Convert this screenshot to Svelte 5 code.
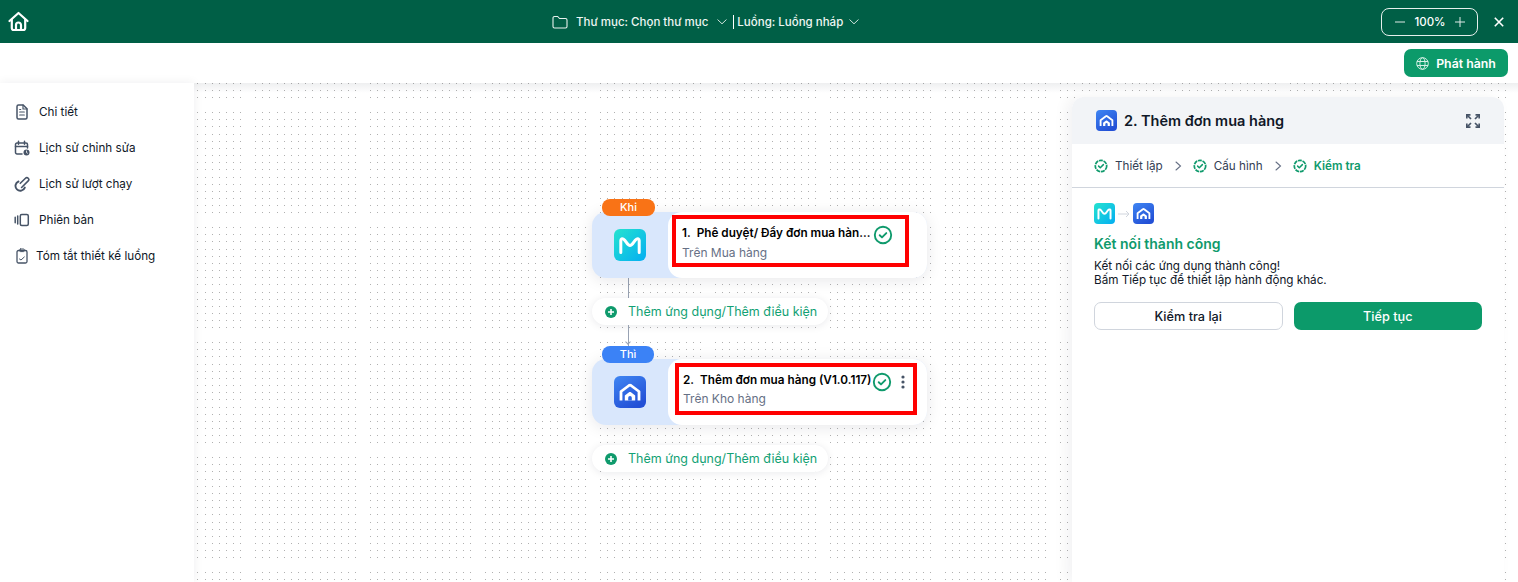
<script>
  const menu = [
    { label: 'Chi tiết', icon: 'doc' },
    { label: 'Lịch sử chỉnh sửa', icon: 'calendar' },
    { label: 'Lịch sử lượt chạy', icon: 'clip' },
    { label: 'Phiên bản', icon: 'version' },
    { label: 'Tóm tắt thiết kế luồng', icon: 'board', tight: true }
  ];

  const steps = ['Thiết lập', 'Cấu hình', 'Kiểm tra'];

  // 15 dots in every 115px tile, the leftover is the visible gap
  const dotOffsets = Array.from({ length: 15 }, (_, i) => Math.round(i * 7.17));
</script>

{#snippet mLogo(size)}
  <svg width={size} height={size} viewBox="0 0 32 32">
    <defs>
      <linearGradient id="mgrad" x1="0" y1="0" x2="1" y2="1">
        <stop offset="0" stop-color="#25e3cf" />
        <stop offset="1" stop-color="#04aef2" />
      </linearGradient>
    </defs>
    <rect width="32" height="32" rx="6" fill="url(#mgrad)" />
    <path d="M6.800 23.500V11.500c0-1.600 1.300-2.200 2.800-1.300C12.200 11.800 13.300 16.500 16 16.500s3.800-4.700 6.400-6.300c1.500-.9 2.800-.3 2.800 1.300v12" fill="none" stroke="#fff" stroke-width="3" stroke-linecap="round" stroke-linejoin="round" />
  </svg>
{/snippet}

{#snippet houseLogo(size)}
  <svg width={size} height={size} viewBox="0 0 32 32">
    <defs>
      <linearGradient id="hgrad" x1="0" y1="0" x2="0.6" y2="1">
        <stop offset="0" stop-color="#3f86f3" />
        <stop offset="1" stop-color="#2350d6" />
      </linearGradient>
    </defs>
    <rect width="32" height="32" rx="6" fill="url(#hgrad)" />
    <path d="M7 24.500V15.500L15 9.500q1-.7 2 0l8 6V24.500" fill="none" stroke="#fff" stroke-width="2.800" stroke-linejoin="round" />
    <path d="M10.800 24.500v-5l4.600-3.400q.6-.4 1.200 0l4.600 3.400v5z" fill="#fff" />
    <path d="M14.200 24.500v-2.800a1.800 1.800 0 0 1 3.600 0v2.800z" fill="#2d66e2" />
  </svg>
{/snippet}

{#snippet checkSolid()}
  <svg class="check" width="20" height="20" viewBox="0 0 20 20" fill="none">
    <circle cx="10" cy="10" r="8.200" stroke="#0f9a6c" stroke-width="1.900" />
    <path d="M6.700 10.200 9 12.400l4.300-4.300" stroke="#0f9a6c" stroke-width="1.900" stroke-linecap="round" stroke-linejoin="round" />
  </svg>
{/snippet}

{#snippet checkDashed()}
  <svg width="14" height="14" viewBox="0 0 14 14" fill="none">
    <circle cx="7" cy="7" r="5.700" stroke="#0f9a6c" stroke-width="1.700" stroke-dasharray="4 .8" />
    <path d="M4.600 7.100 6.300 8.700 9.400 5.600" stroke="#0f9a6c" stroke-width="1.500" stroke-linecap="round" stroke-linejoin="round" />
  </svg>
{/snippet}

{#snippet plusCircle()}
  <svg width="14" height="14" viewBox="0 0 14 14">
    <circle cx="7" cy="7" r="6" fill="#0f9a6c" />
    <path d="M4 7h6M7 4v6" stroke="#fff" stroke-width="1.600" />
  </svg>
{/snippet}

{#snippet chevron()}
  <svg width="10" height="6" viewBox="0 0 10 6" fill="none">
    <path d="M.8.800 5 4.800 9.200.8" stroke="#cfe3dc" stroke-width="1" stroke-linecap="round" />
  </svg>
{/snippet}

{#snippet stepArrow()}
  <svg width="7" height="10" viewBox="0 0 7 10" fill="none">
    <path d="M1 1l4.500 4L1 9" stroke="#667085" stroke-width="1.100" stroke-linecap="round" />
  </svg>
{/snippet}

<div class="page">
  <header class="topbar">
    <svg class="home" width="21" height="21" viewBox="0 0 21 21" fill="none" stroke="#fff" stroke-width="2.200" stroke-linejoin="round" stroke-linecap="round">
      <path d="M1.500 10 10.500 2l9 8" />
      <path d="M3.800 8.500V17a2 2 0 0 0 2 2h9.400a2 2 0 0 0 2-2V8.500" />
      <path d="M8 19v-5a2.500 2.500 0 0 1 5 0v5" />
    </svg>

    <div class="crumbs">
      <svg width="16" height="14" viewBox="0 0 16 14" fill="none" stroke="#e8f2ee" stroke-width="1.100">
        <path d="M1 3a1.500 1.500 0 0 1 1.500-1.500h3.200L7.500 3.500h6A1.500 1.500 0 0 1 15 5v6.500a1.500 1.500 0 0 1-1.500 1.500h-11A1.500 1.500 0 0 1 1 11.500z" stroke-linejoin="round" />
      </svg>
      <span class="crumb folder">Thư mục: Chọn thư mục</span>
      {@render chevron()}
      <span class="divider"></span>
      <span class="crumb">Luồng: Luồng nháp</span>
      {@render chevron()}
    </div>

    <div class="zoom">
      <svg width="10" height="10" viewBox="0 0 10 10"><path d="M0 5h10" stroke="#dfeae6" stroke-width="1" /></svg>
      <span>100%</span>
      <svg width="10" height="10" viewBox="0 0 10 10"><path d="M0 5h10M5 0v10" stroke="#dfeae6" stroke-width="1" /></svg>
    </div>
    <svg class="close" width="10" height="10" viewBox="0 0 10 10"><path d="M.8.800l8.400 8.400M9.200.800.800 9.200" stroke="#fff" stroke-width="1.600" /></svg>
  </header>

  <div class="toolbar">
    <button class="publish">
      <svg width="13" height="13" viewBox="0 0 13 13" fill="none" stroke="#d5efe5" stroke-width="1">
        <circle cx="6.500" cy="6.500" r="5.800" />
        <ellipse cx="6.500" cy="6.500" rx="2.600" ry="5.800" />
        <path d="M1 4.500h11M1 8.500h11" />
      </svg>
      Phát hành
    </button>
  </div>

  <main class="main">
    <nav class="sidebar">
      {#each menu as item}
        <a class="menu-item" class:tight={item.tight} href="#top">
          <svg width="16" height="16" viewBox="0 0 16 16" fill="none" stroke="#475467" stroke-width="1.500" stroke-linecap="round" stroke-linejoin="round">
            {#if item.icon === 'doc'}
              <path d="M3 2.500A1.500 1.500 0 0 1 4.500 1h4.700L13 4.800v8.700a1.500 1.500 0 0 1-1.500 1.500h-7A1.500 1.500 0 0 1 3 13.500z" />
              <path d="M9 1v4h4M5.700 8h4.600M5.700 11h4.600M5.700 5.500h1" stroke-width="1.200" />
            {:else if item.icon === 'calendar'}
              <path d="M8 14H3a1.500 1.500 0 0 1-1.500-1.500v-8A1.500 1.500 0 0 1 3 3h9a1.500 1.500 0 0 1 1.500 1.500V8" />
              <path d="M1.500 6.500h12M4.500 1.300v3M10.500 1.300v3" />
              <circle cx="12.500" cy="12.500" r="3" fill="#475467" stroke="none" />
              <path d="M12.500 11v1.600l1 .6" stroke="#fff" stroke-width=".8" />
            {:else if item.icon === 'clip'}
              <path d="M6.300 7.300 11.500 2.200a1.900 1.900 0 0 1 2.700 2.700L7.600 11.500" stroke-width="1.600" />
              <path d="M4.500 5.500A4.800 4.800 0 1 0 10.800 11.600" stroke-width="1.900" />
            {:else if item.icon === 'version'}
              <rect x="6.300" y="2.500" width="8" height="11" rx="1.500" />
              <path d="M3.700 4v8M1.200 5.200v5.600" />
            {:else}
              <rect x="3" y="2.500" width="10" height="12.500" rx="1.500" stroke-width="1.300" />
              <rect x="5.700" y="1" width="4.600" height="2.600" rx=".8" stroke-width="1" />
              <path d="M5.500 11l1.500 1 3.300-3" stroke-width="1" />
            {/if}
          </svg>
          <span>{item.label}</span>
        </a>
      {/each}
    </nav>

    <section class="canvas">
      <svg class="dots" width="100%" height="100%">
        <defs>
          <pattern id="dot-tile" x="61" y="29" width="115" height="115" patternUnits="userSpaceOnUse">
            {#each dotOffsets as y}
              {#each dotOffsets as x}
                <rect {x} {y} width="1" height="1" fill="#b0b0b0" />
              {/each}
            {/each}
          </pattern>
        </defs>
        <rect width="100%" height="100%" fill="url(#dot-tile)" />
      </svg>

      <div class="flow">
        <div class="step">
          <span class="badge when">Khi</span>
          <div class="node">
            <div class="node-icon">{@render mLogo(32)}</div>
            <div class="node-body">
              <div class="marked first">
                <div class="node-text">
                  <div class="node-title">1.&nbsp; Phê duyệt/ Đẩy đơn mua hàn...</div>
                  <div class="node-sub">Trên Mua hàng</div>
                </div>
                <span class="node-check">{@render checkSolid()}</span>
              </div>
            </div>
          </div>
        </div>

        <div class="link"></div>
        <button class="add">{@render plusCircle()} Thêm ứng dụng/Thêm điều kiện</button>
        <div class="link short"></div>

        <div class="step">
          <span class="badge then">Thì</span>
          <div class="node">
            <div class="node-icon">{@render houseLogo(32)}</div>
            <div class="node-body second-body">
              <div class="marked second">
                <div class="node-text">
                  <div class="node-title">2.&nbsp; Thêm đơn mua hàng (V1.0.117)</div>
                  <div class="node-sub">Trên Kho hàng</div>
                </div>
                <span class="node-check">{@render checkSolid()}</span>
                <svg class="more" width="4" height="14" viewBox="0 0 4 14" fill="#475467">
                  <circle cx="2" cy="2" r="1.600" />
                  <circle cx="2" cy="7" r="1.600" />
                  <circle cx="2" cy="12" r="1.600" />
                </svg>
              </div>
            </div>
          </div>
        </div>

        <button class="add last">{@render plusCircle()} Thêm ứng dụng/Thêm điều kiện</button>
      </div>

      <aside class="panel">
        <div class="panel-head">
          {@render houseLogo(21)}
          <h2>2. Thêm đơn mua hàng</h2>
          <svg class="expand" width="14" height="14" viewBox="0 0 14 14" fill="none" stroke="#475467" stroke-width="1.700">
            <path d="M.8 4.500V.8h3.700M9.500.8h3.700v3.700M13.200 9.500v3.700H9.500M4.500 13.200H.8V9.500" />
            <path d="M1 1l4 4M13 1 9 5M13 13 9 9M1 13l4-4" />
          </svg>
        </div>

        <div class="steps">
          {#each steps as step, i}
            {#if i > 0}<span class="step-arrow">{@render stepArrow()}</span>{/if}
            <span class="step-item" class:active={i === 2}>
              {@render checkDashed()}
              <span>{step}</span>
            </span>
          {/each}
        </div>

        <div class="panel-body">
          <div class="connect">
            {@render mLogo(21)}
            <svg width="12" height="8" viewBox="0 0 12 8" fill="none" stroke="#d0d5dd" stroke-width="1">
              <path d="M0 4h11M8 1l3 3-3 3" />
            </svg>
            {@render houseLogo(21)}
          </div>
          <h3>Kết nối thành công</h3>
          <p>Kết nối các ứng dụng thành công!<br />Bấm Tiếp tục để thiết lập hành động khác.</p>
          <div class="actions">
            <button class="ghost">Kiểm tra lại</button>
            <button class="primary">Tiếp tục</button>
          </div>
        </div>
      </aside>
    </section>
  </main>
</div>

<style>
  :global(body) {
    margin: 0;
    background: #fff;
  }

  .page {
    width: 1518px;
    height: 582px;
    display: flex;
    flex-direction: column;
    overflow: hidden;
    font-family: Inter, "Noto Sans", sans-serif;
    color: #101828;
  }

  button {
    font-family: inherit;
    cursor: pointer;
  }

  .topbar {
    height: 43px;
    flex: none;
    background: #005f46;
    display: flex;
    align-items: center;
    color: #fff;
  }

  .home {
    margin-left: 8px;
    flex: none;
  }

  .crumbs {
    margin-left: 523px;
    display: flex;
    align-items: center;
    font-size: 11.500px;
    font-weight: 500;
    color: #eef6f3;
  }

  .crumb {
    margin-left: 8px;
    margin-right: 6px;
  }

  .crumb.folder {
    margin-right: 9px;
  }

  .divider {
    width: 1px;
    height: 14px;
    background: #fff;
    margin-left: 6px;
    margin-right: -5px;
  }

  .zoom {
    margin-left: auto;
    width: 97px;
    height: 28px;
    box-sizing: border-box;
    border: 1px solid #e6efec;
    border-radius: 8px;
    display: flex;
    align-items: center;
    justify-content: space-between;
    padding: 0 12px 0 13px;
    font-size: 11.500px;
    font-weight: 500;
  }

  .close {
    margin: 0 14px 0 16px;
  }

  .toolbar {
    height: 40px;
    flex: none;
    display: flex;
    justify-content: flex-end;
    align-items: flex-start;
    padding: 6px 10px 0 0;
    box-sizing: border-box;
  }

  .publish {
    width: 104px;
    height: 28px;
    border: none;
    border-radius: 7px;
    background: #0c9a6a;
    color: #fff;
    font-size: 12.300px;
    font-weight: 600;
    display: flex;
    align-items: center;
    justify-content: center;
    gap: 7px;
    padding: 0;
  }

  .main {
    flex: 1;
    display: flex;
    min-height: 0;
  }

  .sidebar {
    width: 194px;
    flex: none;
    padding-top: 11px;
    box-sizing: border-box;
    background: #fff;
    position: relative;
    z-index: 2;
    box-shadow: 0 0 10px rgba(16, 24, 40, 0.07);
  }

  .menu-item {
    height: 36px;
    display: flex;
    align-items: center;
    gap: 9px;
    padding-left: 14px;
    font-size: 11.700px;
    color: #101828;
    text-decoration: none;
  }

  .menu-item.tight {
    gap: 6px;
  }

  .canvas {
    flex: 1;
    position: relative;
    overflow: hidden;
    background: #fff;
  }

  .canvas::before {
    content: "";
    position: absolute;
    inset: 0 0 auto 0;
    height: 10px;
    background: linear-gradient(rgba(16, 24, 40, 0.07), rgba(16, 24, 40, 0));
    z-index: 1;
  }

  .dots {
    position: absolute;
    inset: 0;
  }

  .flow {
    position: absolute;
    left: 398px;
    top: 116px;
    width: 335px;
    display: flex;
    flex-direction: column;
    align-items: flex-start;
  }

  .step {
    position: relative;
    padding-top: 13px;
  }

  .badge {
    position: absolute;
    top: 0;
    left: 10px;
    width: 53px;
    height: 17px;
    border-radius: 8px;
    color: #fff;
    font-size: 11px;
    font-weight: 500;
    line-height: 17px;
    text-align: center;
    z-index: 1;
  }

  .badge.when {
    background: #f97316;
  }

  .badge.then {
    background: #3b82f6;
    width: 52px;
  }

  .node {
    width: 335px;
    height: 66px;
    display: flex;
    border-radius: 14px;
    background: #d9e7fc;
    box-shadow: 0 2px 16px rgba(16, 24, 40, 0.1);
  }

  .node-icon {
    width: 76px;
    flex: none;
    padding: 17px 0 0 22px;
    box-sizing: border-box;
  }

  .node-body {
    flex: 1;
    min-width: 0;
    width: 259px;
    background: #fff;
    border-radius: 14px;
    padding-top: 3px;
    box-sizing: border-box;
  }

  .node-body.second-body {
    padding-top: 4px;
  }

  .marked {
    height: 52px;
    border: 4px solid #f00;
    box-sizing: border-box;
    display: flex;
    align-items: flex-start;
  }

  .marked.first {
    width: 237px;
    margin-left: 4px;
    padding-left: 6px;
  }

  .marked.second {
    width: 242px;
    margin-left: 7px;
    padding-left: 4px;
  }

  .node-text {
    flex: 1;
    min-width: 0;
    padding-top: 7px;
  }

  .marked.second .node-text {
    padding-top: 6px;
  }

  .node-title {
    font-size: 11.750px;
    font-weight: 600;
    line-height: 15px;
    color: #000;
    white-space: nowrap;
  }

  .node-sub {
    margin-top: 4px;
    font-size: 12px;
    line-height: 15px;
    color: #667085;
  }

  .marked.second .node-sub {
    margin-top: 3px;
  }

  .node-check {
    display: block;
    flex: none;
    margin: 6px 12px 0 1px;
    line-height: 0;
  }

  .marked.second .node-check {
    margin: 5px 0 0 1px;
  }

  .more {
    flex: none;
    margin: 8px 8px 0 9px;
  }

  .link {
    width: 1px;
    height: 20px;
    margin-left: 36px;
    background: #98a2b3;
  }

  .link.short {
    height: 21px;
    position: relative;
  }

  .link.short::after {
    content: "";
    position: absolute;
    left: -2px;
    bottom: 2px;
    width: 3px;
    height: 3px;
    border-right: 1px solid #98a2b3;
    border-bottom: 1px solid #98a2b3;
    transform: rotate(45deg);
  }

  .add {
    width: 236px;
    height: 27px;
    border: none;
    border-radius: 14px;
    background: #fff;
    box-shadow: 0 1px 8px rgba(16, 24, 40, 0.09);
    color: #12a174;
    font-size: 12.500px;
    display: flex;
    align-items: center;
    gap: 10px;
    padding: 0 0 0 12px;
    white-space: nowrap;
  }

  .add.last {
    margin-top: 20px;
  }

  .panel {
    position: absolute;
    left: 878px;
    top: 14px;
    bottom: 0;
    width: 432px;
    background: #fff;
    border-radius: 12px 12px 0 0;
    box-shadow: -6px 0 14px rgba(16, 24, 40, 0.05);
    z-index: 2;
  }

  .panel-head {
    height: 47px;
    box-sizing: border-box;
    background: #f2f4f7;
    border-radius: 12px 12px 0 0;
    display: flex;
    align-items: center;
    gap: 7px;
    padding: 0 24px;
  }

  .panel-head h2 {
    margin: 0;
    flex: 1;
    font-size: 14.500px;
    font-weight: 600;
    color: #101828;
  }

  .steps {
    height: 44px;
    box-sizing: border-box;
    border-bottom: 1px solid #d0d5dd;
    display: flex;
    align-items: center;
    padding-left: 22px;
    font-size: 11.700px;
    color: #344054;
  }

  .step-item {
    display: flex;
    align-items: center;
    gap: 7px;
  }

  .step-item.active {
    color: #0f9a6c;
    font-weight: 600;
  }

  .step-arrow {
    display: flex;
    margin: 0 11px 0 12px;
  }

  .panel-body {
    padding: 15px 22px 0;
  }

  .connect {
    display: flex;
    align-items: center;
    gap: 3px;
    height: 21px;
  }

  .panel-body h3 {
    margin: 11px 0 0;
    font-size: 14px;
    font-weight: 600;
    line-height: 18px;
    color: #0f9a6c;
  }

  .panel-body p {
    margin: 6px 0 0;
    font-size: 11.700px;
    line-height: 14px;
    color: #101828;
  }

  .actions {
    display: flex;
    gap: 11px;
    margin-top: 15px;
  }

  .actions button {
    width: 189px;
    height: 28px;
    border-radius: 7px;
    font-size: 12.700px;
    font-weight: 500;
    padding: 0;
  }

  .ghost {
    background: #fff;
    border: 1px solid #d0d5dd;
    color: #101828;
  }

  .primary {
    background: #0c9a6a;
    border: none;
    color: #fff;
    font-weight: 600;
  }
</style>
